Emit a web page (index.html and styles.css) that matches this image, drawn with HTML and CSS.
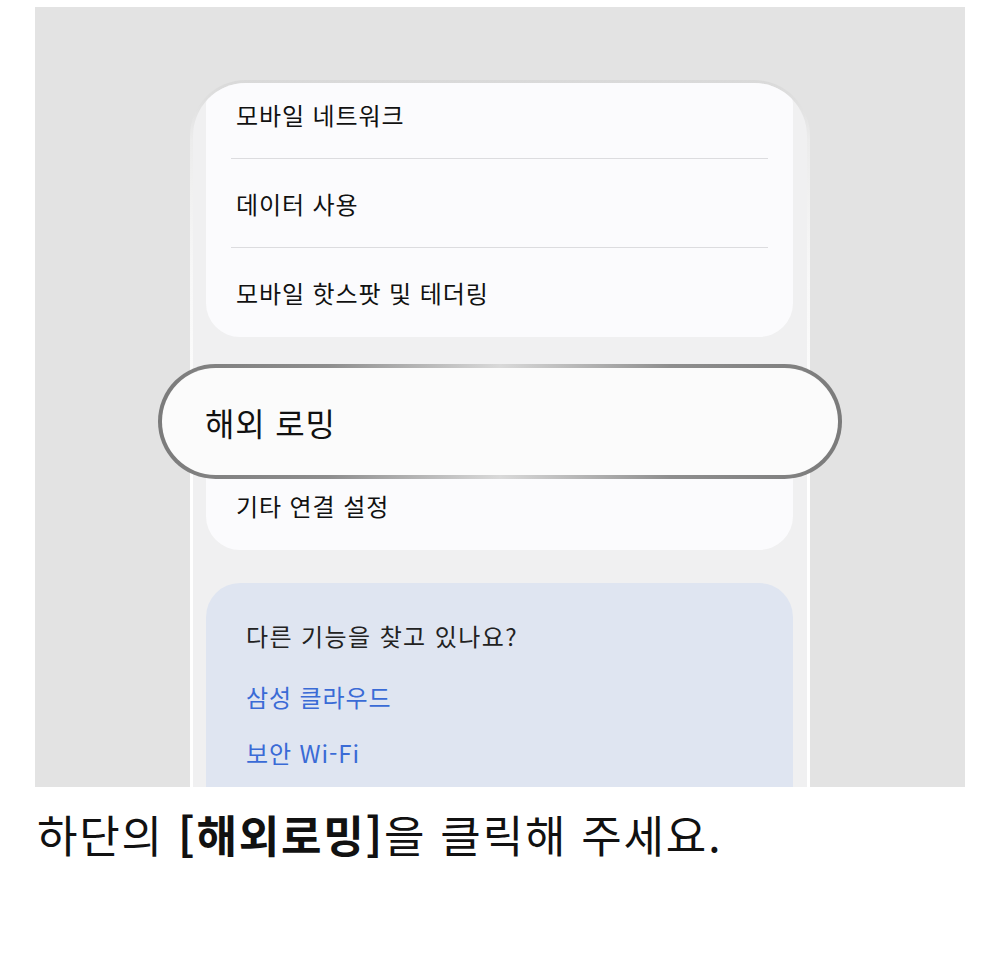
FILE: index.html
```html
<!DOCTYPE html>
<html lang="ko">
<head>
<meta charset="utf-8">
<link rel="stylesheet" href="styles.css">
</head>
<body>
<div class="page">
  <div class="stage">
    <div class="phone">
      <div class="screen">
        <div class="card card-first">
          <div class="row">모바일 네트워크</div>
          <div class="divider"></div>
          <div class="row">데이터 사용</div>
          <div class="divider"></div>
          <div class="row">모바일 핫스팟 및 테더링</div>
        </div>
        <div class="card card-second">
          <div class="row row-hidden">해외 로밍</div>
          <div class="row">기타 연결 설정</div>
        </div>
        <div class="card card-help">
          <div class="help-title">다른 기능을 찾고 있나요?</div>
          <div class="help-link link-one">삼성 클라우드</div>
          <div class="help-link link-two">보안 Wi-Fi</div>
        </div>
      </div>
    </div>
    <div class="pill">해외 로밍</div>
  </div>
  <p class="caption">하단의 <strong>[해외로밍]</strong>을 클릭해 주세요.</p>
</div>
</body>
</html>
```
FILE: styles.css
```css
* { box-sizing: border-box; }
html, body { margin: 0; padding: 0; background: #ffffff; }
body {
  font-family: "Noto Sans CJK KR", "Noto Sans", sans-serif;
  color: #111;
}
.page {
  width: 1000px;
  height: 960px;
  padding: 7px 35px 0 35px;
}
.stage {
  position: relative;
  width: 930px;
  height: 780px;
  background: #e3e3e3;
  overflow: hidden;
  padding-top: 73px;
  display: flex;
  justify-content: center;
}
.phone {
  width: 620px;
  height: 900px;
  padding: 3px;
  border-radius: 56px 56px 0 0;
  background: linear-gradient(180deg, #d9d9d9 0px, #ececec 60px, #f8f8f8 200px, #ffffff 400px);
  flex: none;
}
.screen {
  height: 100%;
  border-radius: 53px 53px 0 0;
  background: #f0f0f1;
  overflow: hidden;
  padding: 0 14px 0 13px;
}
.card {
  background: #fbfbfd;
  border-radius: 34px;
}
.card-first {
  margin-top: -13px;
}
.card-second {
  margin-top: 35px;
}
.row {
  height: 89px;
  display: flex;
  align-items: center;
  padding-left: 30px;
  font-size: 24px;
  letter-spacing: 0.9px;
  color: #111;
}
.row-hidden { visibility: hidden; }
.divider {
  height: 1px;
  margin: 0 25px;
  background: #dcdcdf;
}
.card-first .divider { margin-top: -1px; }
.card-help {
  margin-top: 33px;
  background: #dfe5f1;
  padding: 38px 40px 40px 40px;
  height: 260px;
}
.help-title {
  font-size: 24px;
  letter-spacing: 1.4px;
  line-height: 30px;
  color: #222;
}
.help-link {
  font-size: 24px;
  letter-spacing: 0.9px;
  line-height: 30px;
  color: #3a6bd6;
}
.link-one { margin-top: 31px; }
.link-two { margin-top: 26px; }
.pill {
  position: absolute;
  left: 123px;
  top: 357px;
  width: 684px;
  height: 115px;
  border: 4px solid transparent;
  border-radius: 58px;
  background:
    linear-gradient(#fbfbfb, #fbfbfb) padding-box,
    linear-gradient(90deg, #7b7b7b 0%, #8e8e8e 25%, #d9d9d9 50%, #8e8e8e 75%, #7b7b7b 100%) border-box;
  display: flex;
  align-items: center;
  padding-left: 43px;
  font-size: 32px;
  letter-spacing: 0.8px;
  color: #111;
}
.caption {
  margin: 22px 0 0 2px;
  font-size: 44px;
  letter-spacing: 1.8px;
  line-height: 50px;
  color: #111;
}
.caption strong { font-weight: 700; }
```
